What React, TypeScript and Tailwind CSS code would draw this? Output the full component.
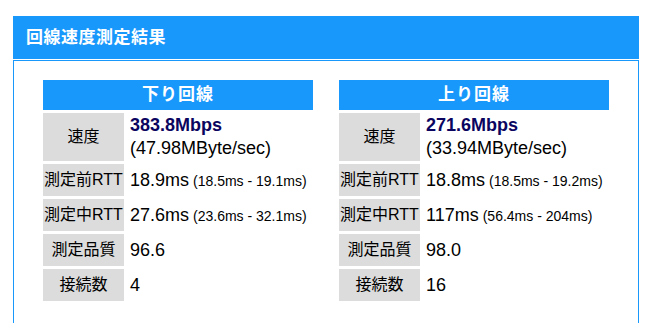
const FONT = { fontFamily: '"Liberation Sans", "Noto Sans CJK JP", sans-serif' }

type Line = {
  title: string
  speed: string
  bytes: string
  rttBefore: string
  rttBeforeRange: string
  rttDuring: string
  rttDuringRange: string
  quality: string
  conns: string
}

const LINES: Line[] = [
  {
    title: '下り回線',
    speed: '383.8Mbps',
    bytes: '(47.98MByte/sec)',
    rttBefore: '18.9ms',
    rttBeforeRange: '(18.5ms - 19.1ms)',
    rttDuring: '27.6ms',
    rttDuringRange: '(23.6ms - 32.1ms)',
    quality: '96.6',
    conns: '4',
  },
  {
    title: '上り回線',
    speed: '271.6Mbps',
    bytes: '(33.94MByte/sec)',
    rttBefore: '18.8ms',
    rttBeforeRange: '(18.5ms - 19.2ms)',
    rttDuring: '117ms',
    rttDuringRange: '(56.4ms - 204ms)',
    quality: '98.0',
    conns: '16',
  },
]

function Label({ children, tall }: { children: React.ReactNode; tall?: boolean }) {
  return (
    <div
      className={`bg-[#dcdcdc] flex items-center justify-center text-[16px] text-black whitespace-nowrap ${
        tall ? 'h-[48px]' : 'h-[32px]'
      }`}
    >
      {children}
    </div>
  )
}

function Value({ main, range }: { main: string; range?: string }) {
  return (
    <div className="h-[32px] flex items-center pl-[3px] whitespace-nowrap text-black">
      <span className="text-[18px]">{main}</span>
      {range && <span className="text-[14px] ml-[4px] mt-[2px]">{range}</span>}
    </div>
  )
}

function LineTable({ line }: { line: Line }) {
  return (
    <div className="w-[270px] grid grid-cols-[81px_1fr] content-start gap-[3px]">
      <div className="col-span-2 h-[30px] bg-[#1998fc] text-white font-bold text-[17px] flex items-center justify-center tracking-[1px]">
        {line.title}
      </div>

      <Label tall>速度</Label>
      <div className="h-[48px] flex flex-col justify-center pl-[3px] leading-[23px]">
        <span className="text-[18px] font-bold text-[#0b0560]">{line.speed}</span>
        <span className="text-[18px] text-black">{line.bytes}</span>
      </div>

      <Label>測定前RTT</Label>
      <Value main={line.rttBefore} range={line.rttBeforeRange} />

      <Label>測定中RTT</Label>
      <Value main={line.rttDuring} range={line.rttDuringRange} />

      <Label>測定品質</Label>
      <Value main={line.quality} />

      <Label>接続数</Label>
      <Value main={line.conns} />
    </div>
  )
}

export default function App() {
  return (
    <div className="w-[654px] h-[323px] bg-white overflow-hidden pt-[16px] pl-[13px]" style={FONT}>
      <div className="w-[626px]">
        <div className="h-[43px] bg-[#1998fc] flex items-center pl-[13px]">
          <h1 className="text-white font-bold text-[17px] tracking-[0.5px]">回線速度測定結果</h1>
        </div>
        <div className="mt-[1px] w-[626px] h-[300px] border border-[#1998fc] pt-[19px] pl-[29px] flex items-start gap-[26px]">
          {LINES.map(l => (
            <LineTable key={l.title} line={l} />
          ))}
        </div>
      </div>
    </div>
  )
}
